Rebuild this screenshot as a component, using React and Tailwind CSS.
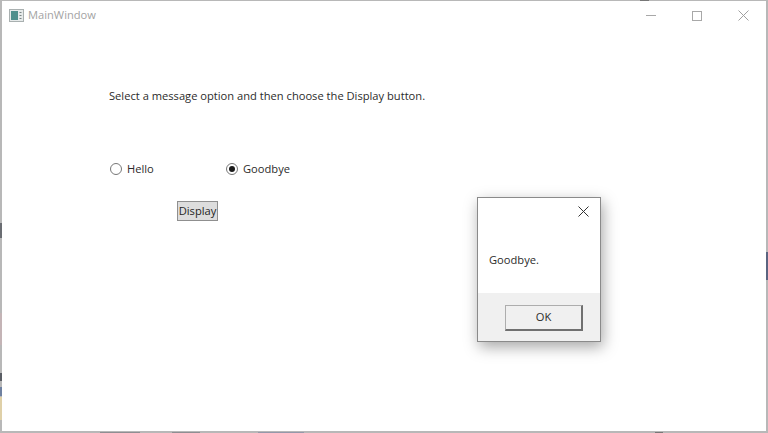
// Main window with a message box on top
function AppIcon() {
  return (
    <svg width="15" height="13" viewBox="0 0 15 13" className="shrink-0">
      <rect x="0.5" y="0.5" width="14" height="12" fill="#e6eaea" stroke="#a9b0b0" />
      <rect x="2" y="2" width="7" height="9" fill="#4f8f8c" />
      <rect x="10.5" y="3" width="2" height="1" fill="#7a8585" />
      <rect x="10.5" y="6" width="2" height="1" fill="#7a8585" />
      <rect x="10.5" y="9" width="2" height="1" fill="#7a8585" />
    </svg>
  );
}

function CloseGlyph({ size, color }) {
  return (
    <svg width={size} height={size} viewBox="0 0 11 11">
      <path d="M0.5 0.5L10.5 10.5M10.5 0.5L0.5 10.5" stroke={color} strokeWidth="1" fill="none" />
    </svg>
  );
}

function Radio({ label, checked, className }) {
  return (
    <div className={`flex items-center gap-[5px] ${className}`}>
      <div className="flex h-[12px] w-[12px] items-center justify-center rounded-full border border-[#777777] bg-white">
        {checked && <div className="h-[6px] w-[6px] rounded-full bg-[#1a1a1a]" />}
      </div>
      <span>{label}</span>
    </div>
  );
}

// bits of the desktop showing at the window edges
const edgeBits = [
  'left-0 top-[223px] h-[15px] w-[2px] bg-[#6a6d72]',
  'left-0 top-[313px] h-[32px] w-[2px] bg-[#c4b4b6]',
  'left-0 top-[373px] h-[8px] w-[2px] bg-[#5a5d64]',
  'left-0 top-[387px] h-[9px] w-[2px] bg-[#6f81a0]',
  'left-0 top-[397px] h-[23px] w-[2px] bg-[#dfd0a8]',
  'right-0 top-[252px] h-[28px] w-[2px] bg-[#5a6480]',
  'left-[640px] top-0 h-px w-[9px] bg-[#777777]',
  'left-[100px] bottom-0 h-px w-[40px] bg-[#8e8e92]',
  'left-[172px] bottom-0 h-px w-[28px] bg-[#8e8e92]',
  'left-[258px] bottom-0 h-px w-[46px] bg-[#9498aa]',
  'left-[655px] bottom-0 h-px w-[8px] bg-[#777777]',
];

export default function App() {
  return (
    <div className="relative flex h-[433px] w-[768px] flex-col overflow-hidden border-t border-r-2 border-b-2 border-l-2 border-[#b8b8b8] bg-white font-['Open_Sans','Noto_Sans',sans-serif] text-[11.15px] text-[#2b2b2b]">
      <div className="flex h-[29px] shrink-0 items-center justify-between pl-[7px]">
        <div className="flex items-center gap-[4px] text-[#a3a3a3]">
          <AppIcon />
          <span>MainWindow</span>
        </div>
        <div className="flex items-center">
          <div className="flex w-[46px] justify-center">
            <div className="h-px w-[10px] bg-[#a8a8a8]" />
          </div>
          <div className="flex w-[46px] justify-center">
            <div className="h-[10px] w-[10px] border border-[#a8a8a8]" />
          </div>
          <div className="flex w-[46px] justify-center">
            <CloseGlyph size={11} color="#a0a0a0" />
          </div>
        </div>
      </div>

      <div className="flex flex-col pl-[107px]">
        <p className="mt-[57px] leading-[18px]">Select a message option and then choose the Display button.</p>
        <div className="mt-[55px] flex h-[18px] items-center pl-px">
          <Radio label="Hello" className="w-[116px]" />
          <Radio label="Goodbye" checked />
        </div>
        <button className="mt-[23px] ml-[68px] h-[20px] w-[41px] border border-[#8f8f8f] bg-[#dddddd] leading-[18px] text-[#1f1f1f]">
          Display
        </button>
      </div>

      <div className="absolute top-[196px] left-[475px] flex h-[145px] w-[124px] flex-col border border-[#8a8a8a] bg-white shadow-[2px_5px_14px_rgba(0,0,0,0.35)]">
        <div className="flex justify-end pt-[8px] pr-[11px]">
          <CloseGlyph size={11} color="#333333" />
        </div>
        <div className="flex flex-1 items-start pt-[35px] pl-[11px]">Goodbye.</div>
        <div className="flex h-[48px] items-center justify-end bg-[#f0f0f0] pr-[17px] pt-[2px]">
          <button className="h-[26px] w-[78px] border border-[#adadad] border-r-2 border-b-2 border-r-[#707070] border-b-[#707070] bg-[#f0f0f0]">
            OK
          </button>
        </div>
      </div>

      {edgeBits.map((c) => (
        <div key={c} className={`fixed ${c}`} />
      ))}
    </div>
  );
}
